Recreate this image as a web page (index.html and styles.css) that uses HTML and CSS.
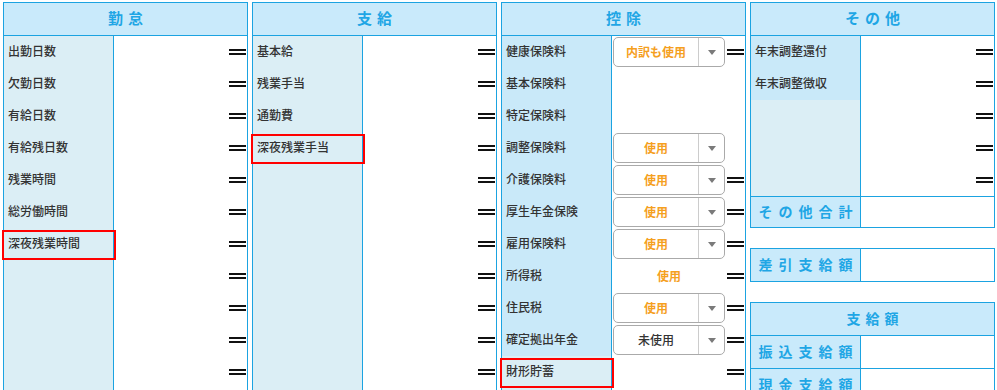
FILE: index.html
```html
<!DOCTYPE html>
<html lang="ja">
<head>
    <meta charset="UTF-8">
    <meta name="viewport" content="width=device-width, initial-scale=1.0">
    <title>給与項目設定</title>
    <link rel="stylesheet" href="styles.css">
</head>
<body>
    <div class="board">
        <!-- 勤怠 -->
        <section class="col">
            <div class="col-head">勤怠</div>
            <div class="row"><div class="label">出勤日数</div><div class="val"><span class="eq"></span></div></div>
            <div class="row"><div class="label">欠勤日数</div><div class="val"><span class="eq"></span></div></div>
            <div class="row"><div class="label">有給日数</div><div class="val"><span class="eq"></span></div></div>
            <div class="row"><div class="label">有給残日数</div><div class="val"><span class="eq"></span></div></div>
            <div class="row"><div class="label">残業時間</div><div class="val"><span class="eq"></span></div></div>
            <div class="row"><div class="label">総労働時間</div><div class="val"><span class="eq"></span></div></div>
            <div class="row"><div class="label hl">深夜残業時間</div><div class="val"><span class="eq"></span></div></div>
            <div class="row"><div class="label"></div><div class="val"><span class="eq"></span></div></div>
            <div class="row"><div class="label"></div><div class="val"><span class="eq"></span></div></div>
            <div class="row"><div class="label"></div><div class="val"><span class="eq"></span></div></div>
            <div class="row"><div class="label"></div><div class="val"><span class="eq"></span></div></div>
            <div class="row"><div class="label"></div><div class="val"></div></div>
        </section>

        <!-- 支給 -->
        <section class="col">
            <div class="col-head">支給</div>
            <div class="row"><div class="label">基本給</div><div class="val"><span class="eq"></span></div></div>
            <div class="row"><div class="label">残業手当</div><div class="val"><span class="eq"></span></div></div>
            <div class="row"><div class="label">通勤費</div><div class="val"><span class="eq"></span></div></div>
            <div class="row"><div class="label hl">深夜残業手当</div><div class="val"><span class="eq"></span></div></div>
            <div class="row"><div class="label"></div><div class="val"><span class="eq"></span></div></div>
            <div class="row"><div class="label"></div><div class="val"><span class="eq"></span></div></div>
            <div class="row"><div class="label"></div><div class="val"><span class="eq"></span></div></div>
            <div class="row"><div class="label"></div><div class="val"><span class="eq"></span></div></div>
            <div class="row"><div class="label"></div><div class="val"><span class="eq"></span></div></div>
            <div class="row"><div class="label"></div><div class="val"><span class="eq"></span></div></div>
            <div class="row"><div class="label"></div><div class="val"><span class="eq"></span></div></div>
            <div class="row"><div class="label"></div><div class="val"></div></div>
        </section>

        <!-- 控除 -->
        <section class="col deduct">
            <div class="col-head">控除</div>
            <div class="row"><div class="label">健康保険料</div><div class="val">
                <div class="sel"><span class="sel-val">内訳も使用</span><span class="sel-btn"></span></div><span class="eq"></span></div></div>
            <div class="row"><div class="label">基本保険料</div><div class="val"></div></div>
            <div class="row"><div class="label">特定保険料</div><div class="val"></div></div>
            <div class="row"><div class="label">調整保険料</div><div class="val">
                <div class="sel"><span class="sel-val">使用</span><span class="sel-btn"></span></div></div></div>
            <div class="row"><div class="label">介護保険料</div><div class="val">
                <div class="sel"><span class="sel-val">使用</span><span class="sel-btn"></span></div><span class="eq"></span></div></div>
            <div class="row"><div class="label">厚生年金保険</div><div class="val">
                <div class="sel"><span class="sel-val">使用</span><span class="sel-btn"></span></div><span class="eq"></span></div></div>
            <div class="row"><div class="label">雇用保険料</div><div class="val">
                <div class="sel"><span class="sel-val">使用</span><span class="sel-btn"></span></div><span class="eq"></span></div></div>
            <div class="row"><div class="label">所得税</div><div class="val">
                <div class="sel plain"><span class="sel-val">使用</span></div><span class="eq"></span></div></div>
            <div class="row"><div class="label">住民税</div><div class="val">
                <div class="sel"><span class="sel-val">使用</span><span class="sel-btn"></span></div><span class="eq"></span></div></div>
            <div class="row"><div class="label">確定拠出年金</div><div class="val">
                <div class="sel"><span class="sel-val off">未使用</span><span class="sel-btn"></span></div><span class="eq"></span></div></div>
            <div class="row"><div class="label light hl">財形貯蓄</div><div class="val"><span class="eq"></span></div></div>
            <div class="row"><div class="label light"></div><div class="val"></div></div>
        </section>

        <!-- その他 / 合計 -->
        <div class="col4">
            <section class="col closed deduct">
                <div class="col-head">その他</div>
                <div class="row"><div class="label">年末調整還付</div><div class="val"><span class="eq"></span></div></div>
                <div class="row"><div class="label">年末調整徴収</div><div class="val"><span class="eq"></span></div></div>
                <div class="row"><div class="label light"></div><div class="val"><span class="eq"></span></div></div>
                <div class="row"><div class="label light"></div><div class="val"><span class="eq"></span></div></div>
                <div class="row"><div class="label light"></div><div class="val"><span class="eq"></span></div></div>
                <div class="row total"><div class="label sum-label">その他合計</div><div class="val"></div></div>
            </section>

            <section class="box">
                <div class="row"><div class="label sum-label">差引支給額</div><div class="val"></div></div>
            </section>

            <section class="box">
                <div class="col-head small">支給額</div>
                <div class="row"><div class="label sum-label">振込支給額</div><div class="val"></div></div>
                <div class="row"><div class="label sum-label">現金支給額</div><div class="val"></div></div>
            </section>
        </div>
    </div>
</body>
</html>
```

FILE: styles.css
```css
* {
    box-sizing: border-box;
}
html, body {
    overflow: hidden;
}
body {
    margin: 0;
    padding: 2px 0 0 3px;
    font-family: "Noto Sans CJK JP", "Noto Sans", sans-serif;
    font-size: 12px;
    color: #333;
    background-color: #fff;
}
.board {
    display: grid;
    grid-template-columns: repeat(4, 245px);
    column-gap: 4px;
    align-items: start;
}
.col {
    border: 1px solid #1ba3e1;
    border-bottom: none;
}
.col.closed {
    border-bottom: 1px solid #1ba3e1;
}
.col-head {
    height: 33px;
    display: flex;
    align-items: center;
    justify-content: center;
    padding: 0 0 3px 5px;
    background-color: #c9eafb;
    border-bottom: 1px solid #1ba3e1;
    color: #1fa6e5;
    font-size: 15px;
    font-weight: bold;
    letter-spacing: 5px;
}
.col-head.small {
    font-size: 14px;
    padding-bottom: 2px;
}
.row {
    display: grid;
    grid-template-columns: 110px 1fr;
    height: 32px;
}
.label {
    position: relative;
    display: flex;
    align-items: center;
    padding: 0 0 3px 4px;
    background-color: #dbeef5;
    border-right: 1px solid #1ba3e1;
    font-weight: 500;
    white-space: nowrap;
}
.deduct .label {
    background-color: #c9e9f9;
}
.deduct .label.light {
    background-color: #dbeef5;
}
/* red highlight frame */
.label.hl::after {
    content: "";
    position: absolute;
    top: 2px;
    bottom: 0;
    left: -2px;
    right: -3px;
    border: 2px solid #f00;
}
.val {
    display: flex;
    align-items: center;
    padding: 0 1px;
}
.eq {
    width: 17px;
    height: 6px;
    margin-left: auto;
    border-top: 2px solid #111;
    border-bottom: 2px solid #111;
}
.sel {
    display: flex;
    width: 112px;
    height: 30px;
    border: 1px solid #aaa;
    border-radius: 5px;
    background-color: #fff;
}
.sel.plain {
    border-color: transparent;
}
.sel-val {
    flex: 1;
    display: flex;
    align-items: center;
    justify-content: center;
    padding-bottom: 2px;
    color: #f5a01e;
    font-weight: bold;
}
.sel-val.off {
    color: #333;
    font-weight: 500;
}
.sel-btn {
    width: 26px;
    display: flex;
    align-items: center;
    justify-content: center;
    border-left: 1px solid #ccc;
}
.sel-btn::before {
    content: "";
    border-left: 4px solid transparent;
    border-right: 4px solid transparent;
    border-top: 5px solid #7a7a7a;
    margin-top: 1px;
}
.col4 {
    display: flex;
    flex-direction: column;
    gap: 20px;
}
.row.total {
    height: 31px;
    border-top: 1px solid #1ba3e1;
}
.label.sum-label {
    justify-content: center;
    padding: 0 0 2px 6px;
    color: #1fa6e5;
    font-size: 14px;
    font-weight: bold;
    letter-spacing: 6px;
}
.deduct .sum-label,
.box .sum-label {
    background-color: #c9eafb;
}
.box {
    border: 1px solid #1ba3e1;
}
.box .row + .row {
    height: 33px;
    border-top: 1px solid #1ba3e1;
}
```
